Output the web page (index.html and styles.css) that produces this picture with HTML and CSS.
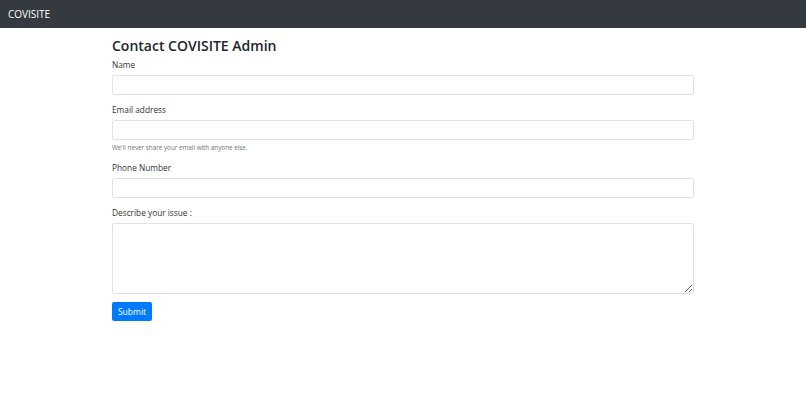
FILE: index.html
```html
<!DOCTYPE html>
<html lang="en">
<head>
  <meta charset="UTF-8">
  <title>Contact COVISITE Admin</title>
  <link rel="stylesheet" href="styles.css">
</head>
<body>
  <!-- Barra superior -->
  <nav class="navbar">
    <a class="brand" href="#">COVISITE</a>
  </nav>

  <div class="container">
    <h2 class="title">Contact COVISITE Admin</h2>
    <form>
      <div class="form-group">
        <label for="name">Name</label>
        <input type="text" id="name" class="form-control">
      </div>
      <div class="form-group">
        <label for="email">Email address</label>
        <input type="email" id="email" class="form-control">
        <small class="form-text">We'll never share your email with anyone else.</small>
      </div>
      <div class="form-group">
        <label for="phone">Phone Number</label>
        <input type="text" id="phone" class="form-control">
      </div>
      <div class="form-group last">
        <label for="issue">Describe your issue :</label>
        <textarea id="issue" class="form-control area"></textarea>
      </div>
      <button type="submit" class="btn">Submit</button>
    </form>
  </div>
</body>
</html>
```

FILE: styles.css
```css
body {
  margin: 0;
  font-family: "Open Sans", "Noto Sans", sans-serif;
  color: #212529;
  background: #fff;
}
/* Barra de navegacion */
.navbar {
  height: 28px;
  background-color: #343a40;
  display: flex;
  align-items: center;
  padding: 0 8px;
}
.brand {
  color: #fff;
  font-size: 10px;
  text-decoration: none;
}
/* Contenedor del formulario */
.container {
  width: 582px;
  margin: 0 auto;
  padding-top: 10px;
}
.title {
  margin: 0 0 4px;
  font-size: 14px;
  font-weight: 600;
  line-height: 1.2;
}
.form-group {
  margin-bottom: 9px;
}
.form-group.last {
  margin-bottom: 8px;
}
label {
  display: block;
  font-size: 8.3px;
  line-height: 12px;
  margin-bottom: 4px;
  color: #333;
}
.form-control {
  display: block;
  box-sizing: border-box;
  width: 100%;
  height: 20px;
  margin: 0;
  padding: 2px 6px;
  border: 1px solid #dfe3e7;
  border-radius: 2px;
  font-family: inherit;
  font-size: 8px;
}
.area {
  height: 71px;
}
.form-text {
  display: block;
  margin-top: 2px;
  font-size: 6.3px;
  line-height: 11px;
  color: #6c757d;
}
.btn {
  display: block;
  height: 19px;
  width: 40px;
  padding: 0;
  border: none;
  border-radius: 2px;
  background-color: #007bff;
  color: #fff;
  font-family: inherit;
  font-size: 8.5px;
  cursor: pointer;
}
```
